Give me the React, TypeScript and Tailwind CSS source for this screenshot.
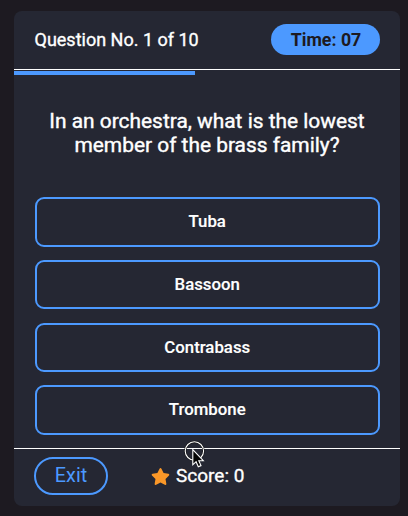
import { FaStar } from "react-icons/fa";

const options = [
  { label: "Tuba", size: "h-[50px]" },
  { label: "Bassoon", size: "mt-[13px] h-[49px]" },
  { label: "Contrabass", size: "mt-[14px] h-[49px]" },
  { label: "Trombone", size: "mt-[13px] h-[50px]" },
];

function Pointer() {
  return (
    <svg
      className="pointer-events-none absolute top-[429px] left-[169px]"
      width="24"
      height="30"
      viewBox="0 0 24 30"
    >
      <circle cx="11.4" cy="11" r="9.2" fill="none" stroke="#111" strokeWidth="2.2" />
      <circle cx="11.4" cy="11" r="9.2" fill="none" stroke="#fff" strokeWidth="1.1" />
      <path
        d="M9.8 9.7V24.8L13.1 21.7L15.3 26.8L18 25.6L15.8 20.7H20.3Z"
        fill="#050505"
        stroke="#fff"
        strokeWidth="1.1"
      />
    </svg>
  );
}

export default function App() {
  return (
    <div className="h-[516px] w-[408px] bg-[#1d1a21] pt-[11px] pl-[14px] font-[Roboto,sans-serif] text-white">
      <main className="relative flex h-[495px] w-[386px] flex-col rounded-[8px] bg-[#252733]">
        <header className="flex h-[59px] shrink-0 items-center justify-between border-b border-white pr-[20px] pb-[2px] pl-[20.5px]">
          <span className="pt-[2px] text-[18px] leading-none [-webkit-text-stroke:0.35px_white]">
            Question No. 1 of 10
          </span>
          <span className="flex h-[31px] w-[109px] items-center justify-center rounded-full bg-[#4c99ff] pt-[2px] pl-px text-[17.8px] font-bold text-[#1d1a21]">
            Time: 07
          </span>
        </header>
        <div className="mt-px h-1 w-[180.5px] shrink-0 bg-[#4c99ff]" />
        <h1 className="mt-[34px] h-[49px] shrink-0 text-center text-[20.9px] leading-[24px] font-normal [-webkit-text-stroke:0.4px_white]">
          In an orchestra, what is the lowest
          <br />
          member of the brass family?
        </h1>
        <div className="mt-[39px] flex flex-col pr-[20px] pl-[20.5px]">
          {options.map(({ label, size }) => (
            <button
              key={label}
              className={`${size} flex shrink-0 items-center justify-center rounded-[9px] border-2 border-[#4c99ff] text-[16.8px] font-medium [-webkit-text-stroke:0.15px_white]`}
            >
              {label}
            </button>
          ))}
        </div>
        <footer className="mt-[13px] flex h-[58px] items-start border-t border-white pt-2 pl-5">
          <button className="flex h-[38px] w-[74px] items-center justify-center rounded-full border-2 border-[#4c99ff] text-[19.8px] text-[#4c99ff]">
            Exit
          </button>
          <div className="ml-[43px] flex h-[38px] items-center gap-[6px]">
            <FaStar className="h-[19px] w-[19px] text-[#fa9728]" />
            <span className="pt-px text-[19px] [-webkit-text-stroke:0.35px_white]">Score: 0</span>
          </div>
        </footer>
        <Pointer />
      </main>
    </div>
  );
}
